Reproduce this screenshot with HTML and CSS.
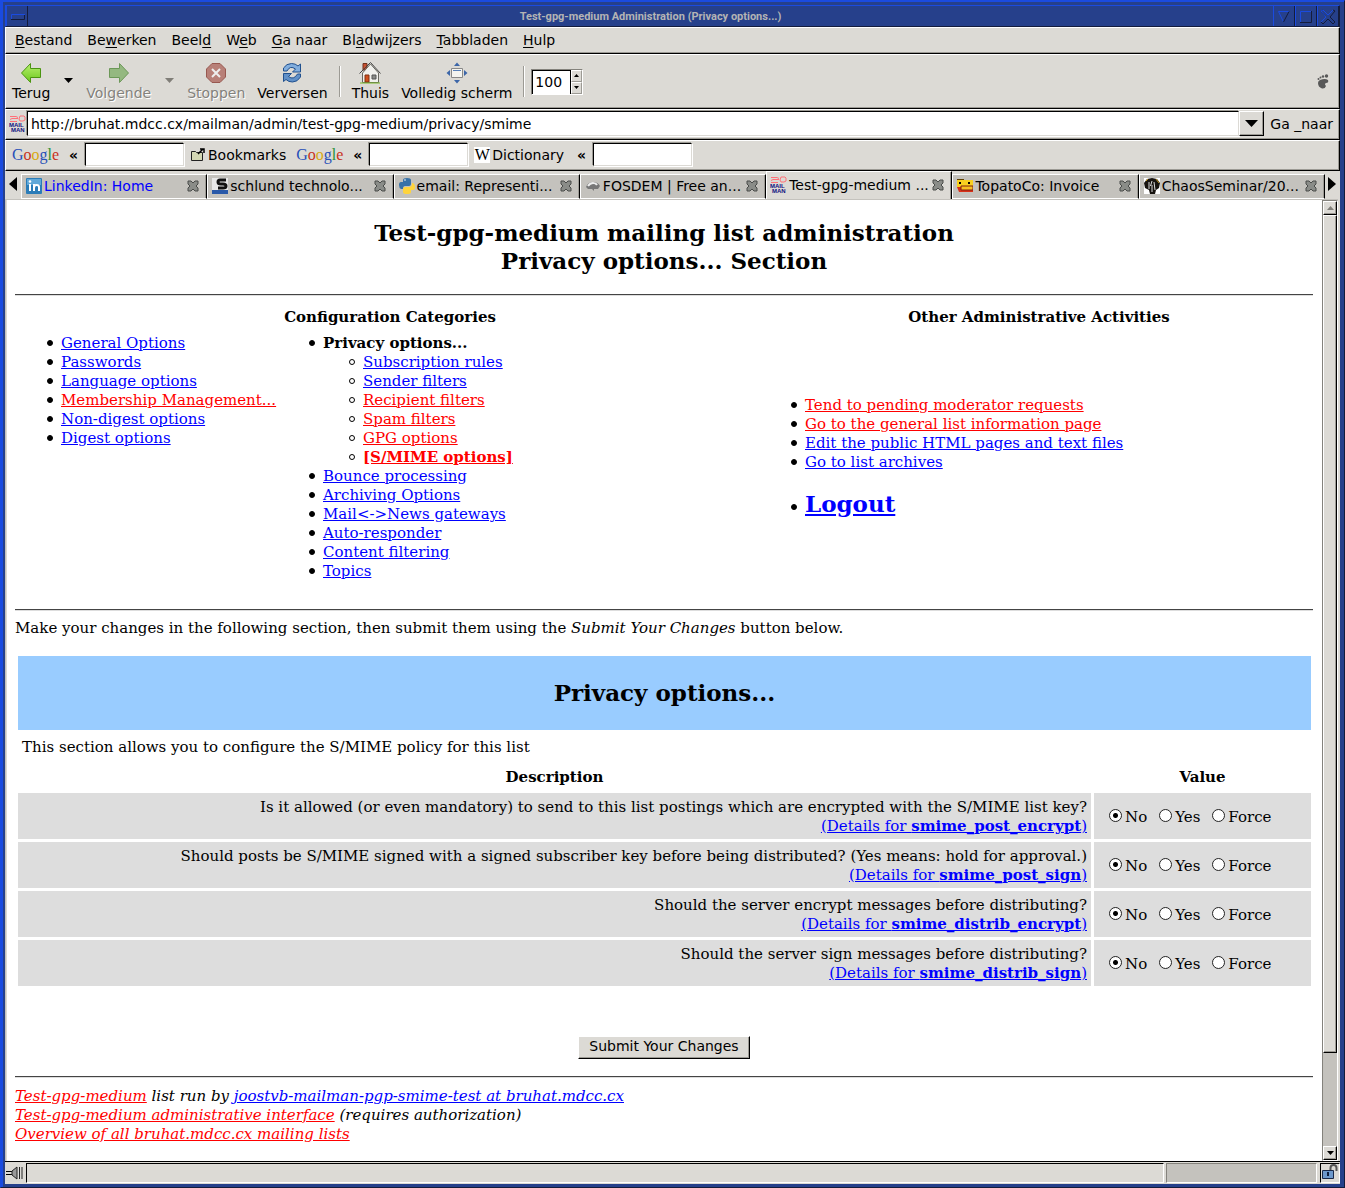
FILE: index.html
```html
<!DOCTYPE html>
<html lang="nl">
<head>
<meta charset="utf-8">
<title>Test-gpg-medium Administration (Privacy options...)</title>
<link rel="stylesheet" href="styles.css">
</head>
<body>
<svg width="0" height="0" class="defs" aria-hidden="true">
  <defs>
    <linearGradient id="green" x2="0" y2="1"><stop offset="0" stop-color="#b8f070"/><stop offset="1" stop-color="#6cc81c"/></linearGradient>
    <symbol id="close" viewBox="0 0 12 12"><path d="M1 1h3l2 2 2-2h3v3L9 6l2 2v3H8L6 9l-2 2H1V8l2-2-2-2z" fill="#8a8c88" stroke="#4a4c4a"/></symbol>
    <symbol id="mailman" viewBox="0 0 17 17"><path d="M1 1.500h6l2 1M1 4.500l2-1h6M1 6.500h7M11 1h4l1 1v3l-2 1h-3l-1-2z" fill="none" stroke="#ff7078"/><text x="0" y="11.500" class="tiny">MAIL</text><text x="2" y="17" class="tiny">MAN</text></symbol>
  </defs>
</svg>
<div class="frame">
<header class="titlebar">
  <button class="wm" aria-label="Venstermenu"><svg width="20" height="20"><path d="M4.500 13V8.500H18" fill="none" stroke="#1a4be0"/><path d="M4 13.500h13.500V9" fill="none" stroke="#141c3c"/></svg></button>
  <h1>Test-gpg-medium Administration (Privacy options...)</h1>
  <button class="wm" aria-label="Minimaliseren"><svg width="20" height="20"><path d="M15 5.500H4.500L9.500 16" fill="none" stroke="#1a4be0"/><path d="M9.500 16L15 5.500" fill="none" stroke="#141c3c"/></svg></button>
  <button class="wm" aria-label="Maximaliseren"><svg width="20" height="20"><path d="M4.500 16V5.500H16" fill="none" stroke="#1a4be0"/><path d="M4 16.500h11.500V5" fill="none" stroke="#141c3c"/></svg></button>
  <button class="wm" aria-label="Sluiten"><svg width="20" height="20"><path d="M3 5l2-1 5 5 5-5 2 1-5 6 5 5-2 2-5-5-5 5-2-2 5-5z" fill="none" stroke="#141c3c"/><path d="M3 16l5-5-5-6 2-1 5 5 5-5" fill="none" stroke="#1a4be0"/></svg></button>
</header>
<div class="app">
<nav class="bar menubar">
  <a href="#"><u>B</u>estand</a><a href="#">Be<u>w</u>erken</a><a href="#">Beel<u>d</u></a><a href="#">W<u>e</u>b</a><a href="#"><u>G</u>a naar</a><a href="#">Bl<u>a</u>dwijzers</a><a href="#"><u>T</u>abbladen</a><a href="#"><u>H</u>ulp</a>
</nav>
<div class="bar toolbar">
  <button class="tool"><svg width="22" height="22"><path d="M1.500 11l9-9.500v5h10v9h-10v5z" fill="url(#green)" stroke="#4a9410"/></svg>Terug</button>
  <button class="drop" aria-label="Terug: geschiedenis"><svg width="9" height="5"><path d="M0 0h9L4.500 5z"/></svg></button>
  <button class="tool" disabled><svg width="22" height="22"><path d="M20.500 11l-9-9.500v5h-10v9h10v5z" fill="#94b880" stroke="#6c9858"/></svg>Volgende</button>
  <button class="drop" disabled aria-label="Volgende: geschiedenis"><svg width="9" height="5"><path d="M0 0h9L4.500 5z" fill="#807e78"/></svg></button>
  <button class="tool" disabled><svg width="22" height="22"><path d="M7 1.500h8l5.500 5.500v8L15 20.500H7L1.500 15V7z" fill="#b88078" stroke="#985850"/><path d="M7 7l8 8M15 7l-8 8" stroke="#eee" stroke-width="2"/></svg>Stoppen</button>
  <button class="tool"><svg width="22" height="22"><path d="M2.500 9V6q3-4.500 8-4.500 4 0 6.500 2.500l2.500-2v8h-8l3-3Q9 3 6 9z" fill="#82aede" stroke="#20508e"/><path d="M19.500 12v3q-3 5-8 5-4 0-6.500-2.500l-2.500 2v-8h8l-3 3q5 4 9-2.500z" fill="#6090c8" stroke="#20508e"/></svg>Verversen</button>
  <span class="sep"></span>
  <button class="tool"><svg width="22" height="22"><path d="M4 1.500h4V8H4z" fill="#c85030" stroke="#70301c"/><path d="M3.500 11v9.500h16V11l-8-9z" fill="#f0f0ec" stroke="#686860"/><path d="M.5 11.500l11-11 10 11" fill="none" stroke="#444" stroke-width="1"/><path d="M6 13h4v7H6z" fill="#d05020" stroke="#803010"/><path d="M13 13h4v4h-4z" fill="#8a8c88" stroke="#555"/><path d="M1 21h20" stroke="#78b828"/></svg>Thuis</button>
  <button class="tool"><svg width="22" height="22"><path d="M8 4l3-3.500L14 4zM8 18l3 3.500 3-3.500zM4 8L.5 11 4 14zM18 8l3.500 3-3.500 3z" fill="#3c66a8"/><path d="M5.500 6.500h11v9h-11z" fill="#f4f4f0" stroke="#888"/><path d="M7 8.500h8" stroke="#5880b8"/></svg>Volledig scherm</button>
  <span class="sep"></span>
  <div class="spin"><input type="text" value="100" aria-label="Zoom"><div class="steps"><button aria-label="Groter"><svg width="5" height="3"><path d="M0 3h5L2.500 0z"/></svg></button><button aria-label="Kleiner"><svg width="5" height="3"><path d="M0 0h5L2.500 3z"/></svg></button></div></div>
  <svg class="foot" width="12" height="15" fill="#585858"><path d="M3 6q5-2 8 0 1 3-2 3-2 1 0 3-1 3-4 2.500Q1 13 1 9q0-2 2-3z"/><circle cx="9.500" cy="2" r="1.700"/><circle cx="6" cy="2.500" r="1.200"/><circle cx="3.500" cy="3.500" r="1"/><circle cx="1.500" cy="5" r="1"/></svg>
</div>
<form class="bar location">
  <svg width="17" height="17" aria-hidden="true"><use href="#mailman"/></svg>
  <input type="text" class="url" aria-label="Adres" value="http://bruhat.mdcc.cx/mailman/admin/test-gpg-medium/privacy/smime">
  <button type="button" class="raised" aria-label="Adressen"><svg width="13" height="7"><path d="M0 0h13L6.500 7z"/></svg></button>
  <button type="button" class="plain">Ga _naar</button>
</form>
<form class="bar bookmarks">
  <label class="google" for="s1"><i class="b">G</i><i class="r">o</i><i class="y">o</i><i class="b">g</i><i class="g">l</i><i class="r">e</i></label><span class="laquo">«</span><input type="text" id="s1">
  <a class="mark" href="#"><svg width="15" height="14"><path d="M1.500 3.500h4l1 1h6v8h-11z" fill="#d4d8b4" stroke="#222"/><path d="M8 6l5-5M10 1h4v4" fill="none" stroke="#000" stroke-width="1.500"/></svg>Bookmarks</a>
  <label class="google" for="s2"><i class="b">G</i><i class="r">o</i><i class="y">o</i><i class="b">g</i><i class="g">l</i><i class="r">e</i></label><span class="laquo">«</span><input type="text" id="s2">
  <label class="mark dict" for="s3"><span class="w">W</span>Dictionary</label><span class="laquo">«</span><input type="text" id="s3">
</form>
<nav class="tabs">
  <button class="scroll" aria-label="Vorige tabs"><svg width="8" height="14"><path d="M8 0v14L0 7z"/></svg></button>
  <div class="tablist">
    <a class="tab fresh" href="#"><svg width="16" height="16"><rect width="16" height="16" rx="1" fill="#2a7cb8"/><rect x="1" y="1" width="14" height="6" fill="#60a8d8"/><path d="M4 6v7M8 13V6M8 10q0-3 2.500-3T13 9v4" stroke="#fff" stroke-width="2" fill="none"/><circle cx="4" cy="3.500" r="1.300" fill="#fff"/></svg><span>LinkedIn: Home</span><svg width="12" height="12"><use href="#close"/></svg></a>
    <a class="tab" href="#"><svg width="16" height="16"><rect width="16" height="12" fill="#e8e8e8"/><rect y="12" width="16" height="4" fill="#2858a8"/><path d="M14 2H8Q6 2 6 4t3 2h2q3 0 3 2t-3 2H6" stroke="#111" stroke-width="3" fill="none"/></svg><span>schlund technolo...</span><svg width="12" height="12"><use href="#close"/></svg></a>
    <a class="tab" href="#"><svg width="16" height="16"><path d="M4 4V2q0-2 4-2t4 2v4q0 2-2 2H6q-2 0-2 3H2q-2-1-2-4t2-3h6z" fill="#3872a8"/><path d="M12 12v2q0 2-4 2t-4-2v-3q0-2 2-2h4q3 0 3-4h1q2 1 2 4t-2 3H8z" fill="#ffd43c"/><circle cx="6" cy="2" r=".8" fill="#fff"/></svg><span>email: Representi...</span><svg width="12" height="12"><use href="#close"/></svg></a>
    <a class="tab" href="#"><svg width="16" height="16"><path d="M1 9q2-5 7-5t7 4l-2 3H9v2L7 11H3z" fill="#777"/><path d="M3 8q2-3 5-3t4 2" stroke="#eee" stroke-width="2" fill="none"/></svg><span>FOSDEM | Free an...</span><svg width="12" height="12"><use href="#close"/></svg></a>
    <a class="tab active" href="#" aria-current="page"><svg width="17" height="17"><use href="#mailman"/></svg><span>Test-gpg-medium ...</span><svg width="12" height="12"><use href="#close"/></svg></a>
    <a class="tab" href="#"><svg width="16" height="16"><path d="M0 2h16v7H0z" fill="#f8d020"/><path d="M0 9h16v5H2z" fill="#d83018"/><path d="M4 8h12v4H4z" fill="#f8c020" stroke="#802010"/><rect x="2" y="4" width="2" height="2"/><rect x="11" y="4" width="2" height="2"/><path d="M0 1.500h7" stroke="#604000"/></svg><span>TopatoCo: Invoice</span><svg width="12" height="12"><use href="#close"/></svg></a>
    <a class="tab" href="#"><svg width="16" height="16"><rect width="16" height="16" fill="#fff"/><path d="M3 1l5-1 5 1 3 4-1 5-3 2-1 4H6l-1-4-4-2-1-5z" fill="#181410"/><path d="M5 4v7M8 3L6.500 8M10 4l1 8M8 7v7" stroke="#ddd" stroke-width="1"/><path d="M2 3l2-2M12 1l3 4" stroke="#b89020"/></svg><span>ChaosSeminar/20...</span><svg width="12" height="12"><use href="#close"/></svg></a>
  </div>
  <button class="scroll" aria-label="Volgende tabs"><svg width="8" height="14"><path d="M0 0v14l8-7z"/></svg></button>
</nav>
<div class="view">
<main>
  <h2>Test-gpg-medium mailing list administration<br>Privacy options... Section</h2>
  <hr>
  <div class="categories">
    <section>
      <h3>Configuration Categories</h3>
      <div class="lists">
        <ul>
          <li><a href="#">General Options</a></li>
          <li><a href="#">Passwords</a></li>
          <li><a href="#">Language options</a></li>
          <li><a href="#" class="seen">Membership Management...</a></li>
          <li><a href="#">Non-digest options</a></li>
          <li><a href="#">Digest options</a></li>
        </ul>
        <ul>
          <li><b>Privacy options...</b>
            <ul>
              <li><a href="#">Subscription rules</a></li>
              <li><a href="#">Sender filters</a></li>
              <li><a href="#" class="seen">Recipient filters</a></li>
              <li><a href="#" class="seen">Spam filters</a></li>
              <li><a href="#" class="seen">GPG options</a></li>
              <li><a href="#" class="seen"><b>[S/MIME options]</b></a></li>
            </ul>
          </li>
          <li><a href="#">Bounce processing</a></li>
          <li><a href="#">Archiving Options</a></li>
          <li><a href="#">Mail&lt;-&gt;News gateways</a></li>
          <li><a href="#">Auto-responder</a></li>
          <li><a href="#">Content filtering</a></li>
          <li><a href="#">Topics</a></li>
        </ul>
      </div>
    </section>
    <section class="other">
      <h3>Other Administrative Activities</h3>
      <ul>
        <li><a href="#" class="seen">Tend to pending moderator requests</a></li>
        <li><a href="#" class="seen">Go to the general list information page</a></li>
        <li><a href="#">Edit the public HTML pages and text files</a></li>
        <li><a href="#">Go to list archives</a></li>
        <li class="logout"><a href="#">Logout</a></li>
      </ul>
    </section>
  </div>
  <hr>
  <p>Make your changes in the following section, then submit them using the <em>Submit Your Changes</em> button below.</p>
  <form>
    <div class="options">
    <h2 class="band">Privacy options...</h2>
    <p class="intro">This section allows you to configure the S/MIME policy for this list</p>
    <table>
      <thead><tr><th>Description</th><th class="value">Value</th></tr></thead>
      <tbody>
        <tr><td>Is it allowed (or even mandatory) to send to this list postings which are encrypted with the S/MIME list key?<br><a href="#">(Details for <b>smime_post_encrypt</b>)</a></td>
          <td class="value"><div class="choices"><label><input type="radio" name="pe" checked>No</label><label><input type="radio" name="pe">Yes</label><label><input type="radio" name="pe">Force</label></div></td></tr>
        <tr><td>Should posts be S/MIME signed with a signed subscriber key before being distributed? (Yes means: hold for approval.)<br><a href="#">(Details for <b>smime_post_sign</b>)</a></td>
          <td class="value"><div class="choices"><label><input type="radio" name="ps" checked>No</label><label><input type="radio" name="ps">Yes</label><label><input type="radio" name="ps">Force</label></div></td></tr>
        <tr><td>Should the server encrypt messages before distributing?<br><a href="#">(Details for <b>smime_distrib_encrypt</b>)</a></td>
          <td class="value"><div class="choices"><label><input type="radio" name="de" checked>No</label><label><input type="radio" name="de">Yes</label><label><input type="radio" name="de">Force</label></div></td></tr>
        <tr><td>Should the server sign messages before distributing?<br><a href="#">(Details for <b>smime_distrib_sign</b>)</a></td>
          <td class="value"><div class="choices"><label><input type="radio" name="ds" checked>No</label><label><input type="radio" name="ds">Yes</label><label><input type="radio" name="ds">Force</label></div></td></tr>
      </tbody>
    </table>
    </div>
    <button type="button" class="submit">Submit Your Changes</button>
  </form>
  <hr>
  <address><a href="#" class="seen">Test-gpg-medium</a> list run by <a href="#">joostvb-mailman-pgp-smime-test at bruhat.mdcc.cx</a><br>
  <a href="#" class="seen">Test-gpg-medium administrative interface</a> (requires authorization)<br>
  <a href="#" class="seen">Overview of all bruhat.mdcc.cx mailing lists</a></address>
</main>
<div class="scrollbar">
  <button aria-label="Omhoog"><svg width="7" height="4"><path d="M0 4h7L3.500 0z" fill="#807e78"/></svg></button>
  <div class="track"><div class="thumb"></div></div>
  <button aria-label="Omlaag"><svg width="7" height="4"><path d="M0 0h7L3.500 4z"/></svg></button>
</div>
</div>
<footer class="status">
  <svg width="18" height="14"><path d="M1 5.500h6M1 8.500h6" stroke="#000"/><path d="M7 5l5-4v12L7 9z" fill="#999" stroke="#222"/><path d="M14.500 1v12M17 1v12" stroke="#222"/><path d="M13.500 2v10" stroke="#ddd"/></svg>
  <div class="message"></div>
  <div class="progress"></div>
  <div class="secure"><svg width="18" height="17"><path d="M9.500 8V4q0-3 3-3t3 3v3" fill="none" stroke="#555" stroke-width="2"/><path d="M1.500 6.500h11v8h-11z" fill="#6c98cc" stroke="#182848"/><path d="M7 8v4" stroke="#102040" stroke-width="2"/></svg></div>
</footer>
</div>
</div>
</body>
</html>
```
FILE: styles.css
```css
*, ::before { box-sizing: border-box; }
body { margin: 0; background: #26408b; color: #000; font: 14px/18px "DejaVu Sans", sans-serif; }
.defs { position: absolute; }
svg { flex: none; }
button { margin: 0; padding: 0; border: 0; background: none; color: inherit; font: inherit; }
input { margin: 0; font: inherit; border-radius: 0; }
.tiny { font: bold 6px "Liberation Sans", sans-serif; fill: #101080; }

.frame { min-height: 100vh; display: flex; flex-direction: column; padding: 4px 4px 3px; border: 1px solid; border-color: #1a4be0 #141c3c #141c3c #1a4be0; box-shadow: inset 2px 1px #1a4be0; }
.titlebar { display: flex; height: 22px; border: 1px solid; border-color: #1a4be0 #141c3c #141c3c #1a4be0; background: #26408b; }
.titlebar h1 { flex: 1; margin: 0; color: #b4b4b4; font: bold 11px/22px Roboto, sans-serif; text-align: center; }
.wm { width: 22px; border-left: 1px solid #1a4be0; border-right: 1px solid #141c3c; }
.wm svg { display: block; }
.app { flex: 1; display: flex; flex-direction: column; background: #dcdad5; }

.bar { display: flex; align-items: center; border: 1px solid; border-color: #fff #000 #000 #fff; box-shadow: inset -1px -1px #9c9a94; padding-bottom: 2px; }
.menubar { height: 27px; gap: 15px; padding-left: 9px; }
.menubar a, .mark, .tab { color: #000; text-decoration: none; }
.menubar u { text-underline-offset: 2px; }
.toolbar { height: 55px; padding: 0 10px 0 6px; }
.tool { display: flex; flex-direction: column; align-items: center; white-space: nowrap; }
.tool + .tool { margin-left: 12px; }
.tool:disabled { color: #84827c; text-shadow: 1px 1px #fff; }
.drop { width: 36px; height: 8px; display: flex; justify-content: center; }
.sep { width: 2px; height: 31px; margin: 0 11px; border-left: 1px solid #9c9a94; border-right: 1px solid #fff; }
.sep + .spin { margin-left: -5px; }
.spin { display: flex; height: 26px; border: 1px solid; border-color: #84827c #fff #fff #84827c; }
.spin input { width: 38px; padding: 0 2px; border: solid #000; border-width: 1px 0 0 1px; }
.steps { display: flex; flex-direction: column; width: 12px; border-left: 1px solid #000; }
.steps button { flex: 1; display: flex; align-items: center; justify-content: center; border: 1px solid; border-color: #fff #9c9a94 #9c9a94 #fff; }
.foot { margin-left: auto; }
.location { height: 31px; padding: 0 6px 2px 3px; }
.url { flex: 1; min-width: 0; height: 25px; margin-left: 1px; padding: 0 3px; }
.url, .bookmarks input { border: 1px solid; border-color: #000 #dcdad5 #dcdad5 #000; background: #fff; box-shadow: 1px 1px #fff, -1px -1px #9c9a94; }
.raised { display: flex; align-items: center; justify-content: center; width: 25px; height: 25px; margin-right: 6px; border: 1px solid; border-color: #fff #000 #000 #fff; box-shadow: inset -1px -1px #9c9a94; }
.bookmarks { height: 31px; padding-left: 6px; }
.bookmarks input { width: 99px; height: 23px; }
.google { width: 46px; font: 16px/20px "Liberation Serif", serif; }
.google i { font-style: normal; }
.b { color: #2850b8; } .r { color: #c83020; } .y { color: #d8a810; } .g { color: #289038; }
.laquo { width: 27px; padding-left: 4px; text-align: center; font-weight: bold; }
.mark { display: flex; align-items: center; gap: 3px; margin: 0 10px 0 6px; }
.dict { margin-right: 2px; gap: 2px; }
.w { width: 16px; height: 16px; background: #fff; font: 16px/16px "Liberation Serif", serif; text-align: center; }

.tabs { display: flex; height: 28px; padding-right: 1px; }
.scroll { width: 16px; padding-top: 6px; display: flex; justify-content: center; }
.scroll:last-child { width: 14px; }
.tablist { flex: 1; display: grid; grid-template-columns: repeat(7, minmax(0, 1fr)); align-items: end; }
.tab { display: flex; align-items: center; gap: 2px; height: 25px; padding: 0 7px 2px 4px; background: #c4c2bd; border: 1px solid; border-color: #fff #000 #fff #fff; box-shadow: inset -1px 0 #9c9a94; white-space: nowrap; }
.tab span { flex: 1; }
.tab.active { height: 28px; padding: 0 7px 2px 3px; background: #dcdad5; border-bottom: 0; }
.tab.fresh { color: #00f; }

.view { flex: 1; display: flex; margin-right: 2px; border-left: 1px solid #c4c2bd; border-top: 1px solid #c4c2bd; }
main { flex: 1; min-width: 0; margin-left: 1px; padding: 19px 9px 16px 8px; background: #fff; font: 15px/19px "DejaVu Serif", serif; }
main h2 { margin: 0 0 19px; font-size: 23px; line-height: 28px; text-align: center; }
hr { margin: 0; height: 2px; border: 0; border-top: 1px solid #444; background: #ddd; }
a { color: #00f; }
a.seen { color: #f00; }
h3 { margin: 0; padding: 12px 0 7px; font-size: 15px; text-align: center; }
.categories { display: grid; grid-template-columns: 750fr 548fr; padding-bottom: 28px; }
.lists { display: grid; grid-template-columns: 262px 1fr; }
ul { margin: 0; padding-left: 40px; list-style: none; }
li { white-space: nowrap; }
li::before { content: ""; display: inline-block; width: 6px; height: 6px; margin: 0 8px 0 -14px; border: 1px solid #000; border-radius: 50%; background: #000; vertical-align: 2px; }
li li::before { background: none; }
.lists > ul { padding-left: 46px; }
.other { display: flex; flex-direction: column; }
.other ul { margin: auto 0; }
.logout { padding: 18px 0 2px; }
.logout a { font-size: 23px; font-weight: bold; line-height: 28px; }
main p { margin: 8px 0 18px; }
.options { padding: 0 2px 0 3px; }
main .band { margin: 0; padding: 23px 0; background: #99ccff; }
.options .intro { margin: 8px 4px 7px; }
table { width: calc(100% + 6px); margin: 0 -3px; border-spacing: 3px; }
th { padding: 1px 4px 3px; }
td { padding: 5px 4px 3px; background: #ddd; text-align: right; }
.value { width: 217px; }
.choices { display: flex; gap: 12px; padding-left: 11px; }
.choices label { display: flex; align-items: center; gap: 3px; }
input[type=radio] { appearance: none; width: 13px; height: 13px; margin-bottom: 3px; border: 1px solid #222; border-radius: 50%; background: #fff; }
input[type=radio]:checked { background: radial-gradient(circle, #000 0 2px, #fff 3px); }
.submit { display: block; margin: 47px auto 17px; padding: 0 10px 2px; height: 23px; background: #dcdad5; border: 1px solid; border-color: #fff #000 #000 #fff; box-shadow: inset -1px -1px #9c9a94; font: 14px/19px "DejaVu Sans", sans-serif; }
address { margin-top: 9px; }
.scrollbar { display: flex; flex-direction: column; width: 16px; border: 1px solid; border-color: #84827c #fff #fff #84827c; background: #c4c2bd; }
.scrollbar button, .thumb { border: 1px solid; border-color: #fff #000 #000 #fff; background: #dcdad5; box-shadow: inset -1px -1px #9c9a94; }
.scrollbar button { display: flex; align-items: center; justify-content: center; height: 14px; }
.track { flex: 1; }
.thumb { height: 90%; }

.status { display: flex; align-items: center; height: 23px; border-top: 1px solid #000; }
.status div { height: 20px; border: 1px solid; border-color: #000 #fff #fff #000; }
.status .message { flex: 1; margin-left: 3px; }
.status .progress { width: 151px; margin: 0 3px 0 2px; background: #c4c2bd; border-color: #84827c #fff #fff #84827c; }
```
